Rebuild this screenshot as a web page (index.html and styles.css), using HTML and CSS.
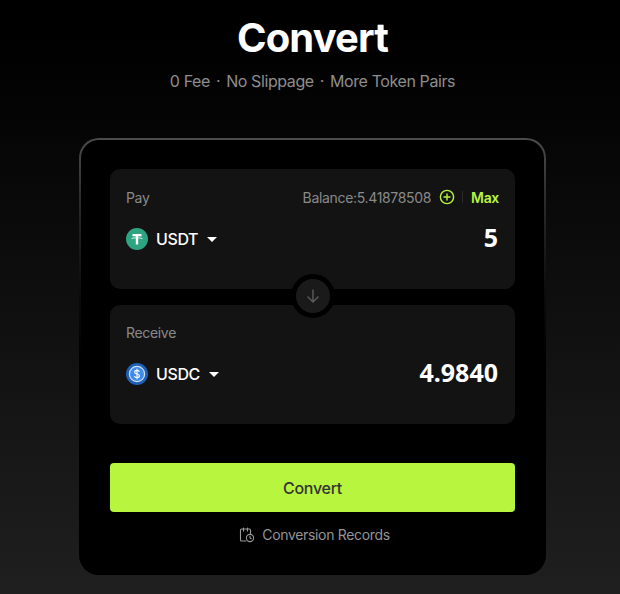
FILE: index.html
```html
<!DOCTYPE html>
<html lang="en">
<head>
<meta charset="utf-8">
<title>Convert</title>
<link rel="stylesheet" href="styles.css">
</head>
<body>
<main class="page">
  <h1 class="title">Convert</h1>
  <p class="subtitle">0 Fee<span class="dot">·</span>No Slippage<span class="dot">·</span>More Token Pairs</p>
  <section class="card">
    <div class="panels">
      <div class="panel">
        <div class="row-top">
          <span class="label">Pay</span>
          <div class="balance">
            <span>Balance:5.41878508</span>
            <svg class="plus" viewBox="0 0 16 16" width="16" height="16" fill="none" stroke="#b8f53f" stroke-width="1.4" stroke-linecap="round"><circle cx="8" cy="8" r="6.6"/><path d="M8 5v6M5 8h6"/></svg>
            <i class="sep"></i>
            <span class="max">Max</span>
          </div>
        </div>
        <div class="row-main">
          <div class="token">
            <svg class="coin" viewBox="0 0 22 22" width="22" height="22"><circle cx="11" cy="11" r="11" fill="#2fa483"/><path d="M6.500 6h9v2.200h-3.300v8.300H9.800V8.200H6.500z" fill="#fff"/><path d="M5.500 10.500c2-.9 9-.9 11 0" fill="none" stroke="#fff" stroke-width=".8"/></svg>
            <span class="symbol">USDT</span>
            <i class="caret"></i>
          </div>
          <span class="amount">5</span>
        </div>
      </div>
      <div class="swap">
        <svg viewBox="0 0 16 16" width="16" height="16" fill="none" stroke="#5c5c5c" stroke-width="1.4" stroke-linecap="round" stroke-linejoin="round"><path d="M8 2v12M3 9l5 5 5-5"/></svg>
      </div>
      <div class="panel panel-receive">
        <div class="row-top">
          <span class="label">Receive</span>
        </div>
        <div class="row-main">
          <div class="token">
            <svg class="coin" viewBox="0 0 22 22" width="22" height="22"><circle cx="11" cy="11" r="11" fill="#1f5fb5"/><circle cx="11" cy="11" r="7.600" fill="#3f8be6" stroke="#cfe3fb" stroke-width="1.200"/><path d="M13.400 8.800c-.4-1-1.300-1.400-2.400-1.400-1.300 0-2.300.7-2.300 1.800 0 2.400 4.800 1.200 4.800 3.600 0 1.100-1.100 1.800-2.500 1.800-1.200 0-2.200-.5-2.600-1.500M11 5.800v10.400" fill="none" stroke="#fff" stroke-width="1.100"/></svg>
            <span class="symbol">USDC</span>
            <i class="caret"></i>
          </div>
          <span class="amount">4.9840</span>
        </div>
      </div>
    </div>
    <button class="submit" type="button">Convert</button>
    <a class="records">
      <svg viewBox="0 0 16 16" width="16" height="16" fill="none" stroke="#9a9a9a" stroke-width="1.100" stroke-linecap="round" stroke-linejoin="round"><path d="M7 14H2.500a1 1 0 0 1-1-1V3a1 1 0 0 1 1-1h8a1 1 0 0 1 1 1v3.500"/><path d="M4.500 1v3M8.500 1v3"/><circle cx="11" cy="11" r="3.600"/><path d="M11 9.300V11l1.200.7"/></svg>
      <span>Conversion Records</span>
    </a>
  </section>
</main>
</body>
</html>
```
FILE: styles.css
```css
* { box-sizing: border-box; }
html, body { margin: 0; height: 594px; overflow: hidden; }
body {
  background: linear-gradient(180deg, #000 0%, #000 6%, #1f1f1f 100%);
  font-family: "Inter", "Noto Sans", sans-serif;
  color: #fff;
}
.page { display: flex; flex-direction: column; align-items: center; padding: 14px 0 0 5px; }
.title { margin: 0; font-size: 40px; line-height: 48px; font-weight: 700; letter-spacing: -0.85px; }
.subtitle { margin: 7px 0 0; font-size: 16px; line-height: 24px; color: #8e8e8e; letter-spacing: -0.4px; }
.dot { margin: 0 6px; }
.card {
  margin-top: 45px;
  width: 467px;
  height: 437px;
  padding: 29px;
  background: #000;
  border-radius: 20px;
  border: 2px solid transparent;
  background-image: linear-gradient(#000, #000), linear-gradient(180deg, #4c4c4c 0%, #2a2a2a 15%, #0c0c0c 35%, #000 50%);
  background-origin: border-box;
  background-clip: padding-box, border-box;
  display: flex;
  flex-direction: column;
}
.panels { position: relative; display: flex; flex-direction: column; gap: 16px; }
.panel {
  height: 120px;
  padding: 20px 16px;
  background: #131313;
  border-radius: 10px;
  display: flex;
  flex-direction: column;
}
.panel-receive { height: 119px; padding-top: 19px; }
.row-top { display: flex; justify-content: space-between; align-items: center; height: 16px; font-size: 14px; color: #8a8a8a; letter-spacing: -0.33px; }
.balance { display: flex; align-items: center; }
.plus { margin-left: 8px; }
.sep { width: 1px; height: 12px; background: #2a2a2a; margin: 0 8px 0 7px; }
.max { color: #b8f53f; font-weight: 600; }
.row-main { margin-top: 16px; display: flex; justify-content: space-between; align-items: center; height: 36px; }
.token { display: flex; align-items: center; }
.symbol { margin-left: 8px; font-size: 16px; font-weight: 500; letter-spacing: -0.4px; }
.caret {
  margin-left: 9px;
  width: 0;
  height: 0;
  border-left: 5px solid transparent;
  border-right: 5px solid transparent;
  border-top: 5px solid #fff;
}
.amount { font-family: "Noto Sans", sans-serif; font-size: 25px; line-height: 32px; font-weight: 700; margin: -5px 1px 0 0; }
.swap {
  position: absolute;
  left: 50%;
  top: 105px;
  transform: translateX(-50%);
  width: 44px;
  height: 44px;
  border-radius: 50%;
  background: #1a1a1a;
  border: 5px solid #000;
  display: flex;
  align-items: center;
  justify-content: center;
}
.submit {
  margin-top: 39px;
  height: 49px;
  flex: none;
  border: 0;
  border-radius: 4px;
  background: #b8f53f;
  color: #333;
  font: 500 16px "Inter", "Noto Sans", sans-serif;
  letter-spacing: -0.3px;
}
.records {
  margin: 14px 0 0 4px;
  display: flex;
  align-items: center;
  justify-content: center;
  gap: 7px;
  font-size: 14px;
  color: #949494;
  letter-spacing: -0.33px;
}
```
